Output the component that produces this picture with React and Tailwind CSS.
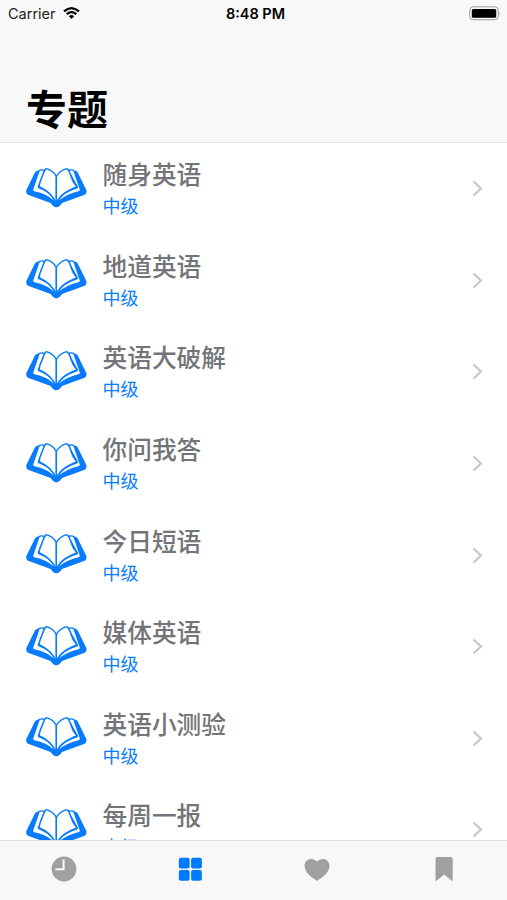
import React from 'react';

const topics = [
  { id: 1, name: '随身英语', level: '中级' },
  { id: 2, name: '地道英语', level: '中级' },
  { id: 3, name: '英语大破解', level: '中级' },
  { id: 4, name: '你问我答', level: '中级' },
  { id: 5, name: '今日短语', level: '中级' },
  { id: 6, name: '媒体英语', level: '中级' },
  { id: 7, name: '英语小测验', level: '中级' },
  { id: 8, name: '每周一报', level: '中级' },
];

function BookIcon() {
  return (
    <svg className="w-[61px] h-10 shrink-0 mb-0.5" viewBox="12 26 183 120" fill="none">
      {/* Cover */}
      <path
        fill="#067bfe"
        d="M70 31 Q56 27 47 34 Q40 35 38 41 L13 92 Q11 102 18 106 L86 131 Q93 143 103 144 Q113 143 120 131 L188 106 Q195 102 193 92 L168 41 Q166 35 160 34 Q150 27 136 31 L103 60 Z"
      />
      {/* Under pages */}
      <path fill="#fff" d="M53 35 Q59 32 65 35 L47 82 Q46 87 53 88 Q83 99 96 124 Q75 104 37 96 Q32 94 34 90 Z" />
      <path fill="#fff" d="M154 35 Q147 32 142 35 L168 82 Q170 87 163 88 Q126 99 110 124 Q134 104 171 95 Q175 94 173 90 Z" />
      {/* Top pages */}
      <path fill="#fff" stroke="#067bfe" strokeWidth="4.2" strokeLinejoin="round" d="M72 28 Q92 32 103 51 V134 Q91 99 51 82 Q53 67 61 51 Q66 36 72 28 Z" />
      <path fill="#fff" stroke="#067bfe" strokeWidth="4.2" strokeLinejoin="round" d="M135 28 Q115 32 103 51 V134 Q113 101 165 83 Q151 67 147 51 Q142 34 135 28 Z" />
    </svg>
  );
}

function StatusBar() {
  return (
    <div className="grid grid-cols-3 items-center h-7 pl-2 pr-1.5 leading-7 text-black font-[Inter,sans-serif]">
      <div className="flex items-center gap-[7px]">
        <span className="text-[14.5px] text-[#222]">Carrier</span>
        <svg className="w-[17px] h-3 mb-0.5" viewBox="0 0 17 12" fill="none" stroke="#000" strokeWidth="2.2">
          <path d="M1 4.4 Q8.5 -2.1 16 4.4" />
          <path d="M3.7 7.2 Q8.5 3 13.3 7.2" />
          <path d="M5.9 9.2 Q8.5 7 11.1 9.2 L8.5 12 Z" fill="#000" stroke="none" />
        </svg>
      </div>
      <span className="pl-0.5 text-center font-semibold text-[14.5px]">8:48 PM</span>
      <div className="flex justify-end">
        <svg className="w-8 h-[15px] mb-0.5" viewBox="0 0 32 15" fill="none">
          <rect x="0.7" y="0.8" width="28.5" height="13" rx="3.5" stroke="#999" />
          <rect x="2.8" y="2.9" width="24.4" height="8.9" rx="1.5" fill="#000" />
          <path d="M30.6 5.4 Q32 7.3 30.6 9.2 Z" fill="#999" />
        </svg>
      </div>
    </div>
  );
}

function TopicRow({ topic }) {
  return (
    <li className="flex items-center h-[91.6px] shrink-0 pl-[26px] pr-6">
      <BookIcon />
      <div className="flex-1 ml-[15.5px] mb-px">
        <h2 className="text-[24.7px] leading-[34px] font-medium text-[#737477]">{topic.name}</h2>
        <p className="text-[18px] leading-[30px] text-[#067bfe]">{topic.level}</p>
      </div>
      <svg className="w-[11px] h-[17px]" viewBox="0 0 11 17" fill="none" stroke="#c7c7cc" strokeWidth="2.2">
        <path d="M1.5 1.5 L9 8.5 L1.5 15.5" />
      </svg>
    </li>
  );
}

function TabBar() {
  return (
    <nav className="grid grid-cols-4 h-[60px] shrink-0 border-t border-[#dedede] bg-[#f8f8f8] pt-[15px]">
      <button className="flex justify-center items-start pl-0.5">
        <svg className="w-[26px] h-[26px]" viewBox="0 0 26 26">
          <circle cx="13" cy="13" r="12.4" fill="#a0a0a0" />
          <path d="M12.6 3.5 V13.3 H4.5" fill="none" stroke="#f8f8f8" strokeWidth="2" />
        </svg>
      </button>
      <button className="flex justify-center items-start">
        <svg className="w-[26px] h-[26px]" viewBox="0 0 26 26" fill="#007aff">
          <rect x="1.8" y="1.7" width="10.8" height="10.8" rx="2" />
          <rect x="14.1" y="1.7" width="10.8" height="10.8" rx="2" />
          <rect x="1.8" y="14" width="10.8" height="10.8" rx="2" />
          <rect x="14.1" y="14" width="10.8" height="10.8" rx="2" />
        </svg>
      </button>
      <button className="flex justify-center items-start">
        <svg className="w-[26px] h-[26px]" viewBox="0 0 26 26" fill="#a0a0a0">
          <path d="M13 25 C8 21.5 0.5 16.5 0.5 10 C0.5 3 8.5 0.5 13 5.6 C17.5 0.5 25.5 3 25.5 10 C25.5 16.5 18 21.5 13 25 Z" />
        </svg>
      </button>
      <button className="flex justify-center items-start">
        <svg className="w-[26px] h-[26px]" viewBox="0 0 26 26" fill="#a0a0a0">
          <path d="M4.5 3 Q4.5 1 6.5 1 H19.7 Q21.7 1 21.7 3 V25.4 L13.1 18.4 L4.5 25.4 Z" />
        </svg>
      </button>
    </nav>
  );
}

function App() {
  return (
    <div className="flex flex-col w-[507px] h-[900px] overflow-hidden bg-white font-['Noto_Sans_CJK_SC',sans-serif]">
      <header className="h-[143px] shrink-0 bg-[#f8f8f8] border-b border-[#e4e4e4]">
        <StatusBar />
        <h1 className="pl-[26px] pt-[49px] text-[41px] leading-[60px] font-bold text-black">专题</h1>
      </header>
      <ul className="flex flex-col flex-1 min-h-0 overflow-hidden">
        {topics.map((topic) => (
          <TopicRow key={topic.id} topic={topic} />
        ))}
      </ul>
      <TabBar />
    </div>
  );
}

export default App;
